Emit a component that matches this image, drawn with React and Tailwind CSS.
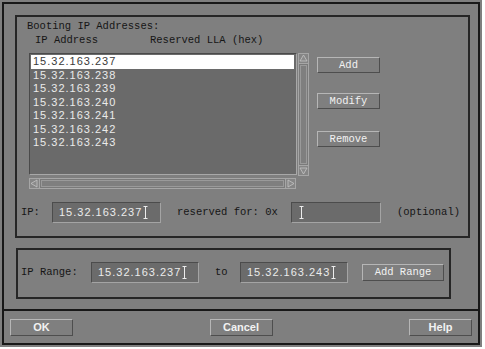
import React from 'react';

const ips = ['15.32.163.237', '15.32.163.238', '15.32.163.239', '15.32.163.240', '15.32.163.241', '15.32.163.242', '15.32.163.243'];

function Caret() {
  return (
    <svg width="5" height="13" viewBox="0 0 5 13" className="ml-[1px] shrink-0">
      <path d="M0.5 0.5h4M2.5 0.5v12M0.5 12.5h4" stroke="#ececec" strokeWidth="1" fill="none" />
    </svg>
  );
}

function Field({ value, className = '' }) {
  return (
    <div className={`h-[21px] flex items-center pl-[6px] bg-[#6b6b6b] border border-t-[#4c4c4c] border-l-[#4c4c4c] border-b-[#a4a4a4] border-r-[#a4a4a4] ${className}`}>
      {value && (
        <span className="font-['Liberation_Sans',sans-serif] text-[11px] tracking-[1px] text-[#ececec] leading-none">{value}</span>
      )}
      <Caret />
    </div>
  );
}

function Btn({ children, className = '', bold = false }) {
  return (
    <div
      className={`flex items-center justify-center bg-[#7f7f7f] border border-t-[#b6b6b6] border-l-[#b6b6b6] border-b-[#4e4e4e] border-r-[#4e4e4e] text-[#f2f2f2] leading-none ${
        bold ? "font-['Liberation_Sans',sans-serif] font-bold text-[11px]" : "font-['Liberation_Mono',monospace] text-[10.5px]"
      } ${className}`}
    >
      {children}
    </div>
  );
}

function Arrow({ dir }) {
  const pts = { up: '1,7 4.5,1 8,7', down: '1,2 4.5,8 8,2', left: '7,1 1,4.5 7,8', right: '2,1 8,4.5 2,8' }[dir];
  return (
    <svg width="9" height="9" viewBox="0 0 9 9">
      <polygon points={pts} fill="#8a8a8a" stroke="#c4c4c4" strokeWidth="0.8" />
    </svg>
  );
}

export default function App() {
  return (
    <div className="w-[485px] h-[349px] bg-white text-[#161616] font-['Liberation_Mono',monospace] text-[10.5px]">
      <div className="w-[482px] h-[347px] bg-[#7f7f7f] p-[2px]">
        <div className="h-full border-2 border-[#181818] flex flex-col">
          {/* Booting IP Addresses group */}
          <div className="ml-[11px] mt-[11px] w-[455px] h-[223px] border-2 border-[#262626] flex flex-col">
            <div className="mt-[3px] ml-[10px] h-[12px] leading-[12px]">Booting IP Addresses:</div>
            <div className="mt-[2px] ml-[18px] h-[12px] leading-[12px] flex">
              <span className="w-[115px]">IP Address</span>
              <span>Reserved LLA (hex)</span>
            </div>

            <div className="mt-[7px] ml-[12px] flex">
              <div className="flex flex-col">
                <div className="flex">
                  <div className="w-[268px] h-[122px] bg-[#6a6a6a] border border-t-[#4a4a4a] border-l-[#4a4a4a] border-b-[#a8a8a8] border-r-[#a8a8a8] pt-[1px] font-['Liberation_Sans',sans-serif] text-[11px] tracking-[1px]">
                    {ips.map((ip, i) => (
                      <div
                        key={ip}
                        className={`h-[13.5px] ml-[1px] mr-[2px] pl-[2px] flex items-center leading-none ${
                          i === 0 ? 'bg-white text-[#3a3a3a]' : 'text-[#ebebeb]'
                        }`}
                      >
                        {ip}
                      </div>
                    ))}
                  </div>
                  <div className="ml-[1px] w-[11px] h-[123px] flex flex-col border border-[#a6a6a6] bg-[#7a7a7a]">
                    <div className="h-[10px] flex items-center justify-center border-b border-[#a6a6a6] bg-[#858585]">
                      <Arrow dir="up" />
                    </div>
                    <div className="flex-1 mx-[1px] my-[1px] border border-[#9a9a9a] bg-[#7f7f7f]" />
                    <div className="h-[10px] flex items-center justify-center border-t border-[#a6a6a6] bg-[#858585]">
                      <Arrow dir="down" />
                    </div>
                  </div>
                </div>
                <div className="mt-[2px] w-[267px] h-[11px] flex border border-[#a6a6a6] bg-[#7a7a7a]">
                  <div className="w-[10px] flex items-center justify-center border-r border-[#a6a6a6] bg-[#858585]">
                    <Arrow dir="left" />
                  </div>
                  <div className="flex-1 my-[1px] mx-[1px] border border-[#9a9a9a] bg-[#7f7f7f]" />
                  <div className="w-[10px] flex items-center justify-center border-l border-[#a6a6a6] bg-[#858585]">
                    <Arrow dir="right" />
                  </div>
                </div>
              </div>

              <div className="ml-[8px] flex flex-col">
                <Btn className="mt-[4px] w-[63px] h-[16px]">Add</Btn>
                <Btn className="mt-[20px] w-[63px] h-[16px]">Modify</Btn>
                <Btn className="mt-[22px] w-[63px] h-[16px]">Remove</Btn>
              </div>
            </div>

            <div className="mt-[13px] pl-[4px] flex items-center">
              <span className="w-[31px]">IP:</span>
              <Field value="15.32.163.237" className="w-[109px]" />
              <span className="ml-[16px] w-[114px]">reserved for: 0x</span>
              <Field className="w-[90px]" />
              <span className="ml-[16px]">(optional)</span>
            </div>
          </div>

          {/* IP Range group */}
          <div className="ml-[12px] mt-[10px] w-[435px] h-[51px] border-2 border-[#262626] flex items-start">
            <div className="mt-[12px] pl-[3px] flex items-center">
              <span className="w-[70px]">IP Range:</span>
              <Field value="15.32.163.237" className="w-[108px]" />
              <span className="ml-[16px] w-[25px]">to</span>
              <Field value="15.32.163.243" className="w-[108px]" />
              <Btn className="ml-[14px] w-[82px] h-[17px]">Add Range</Btn>
            </div>
          </div>

          <div className="mt-[10px] h-[2px] bg-[#181818]" />

          <div className="mt-[8px] px-[6px] flex justify-between">
            <Btn bold className="w-[63px] h-[17px]">OK</Btn>
            <Btn bold className="w-[63px] h-[17px]">Cancel</Btn>
            <Btn bold className="w-[63px] h-[17px]">Help</Btn>
          </div>
        </div>
      </div>
    </div>
  );
}
